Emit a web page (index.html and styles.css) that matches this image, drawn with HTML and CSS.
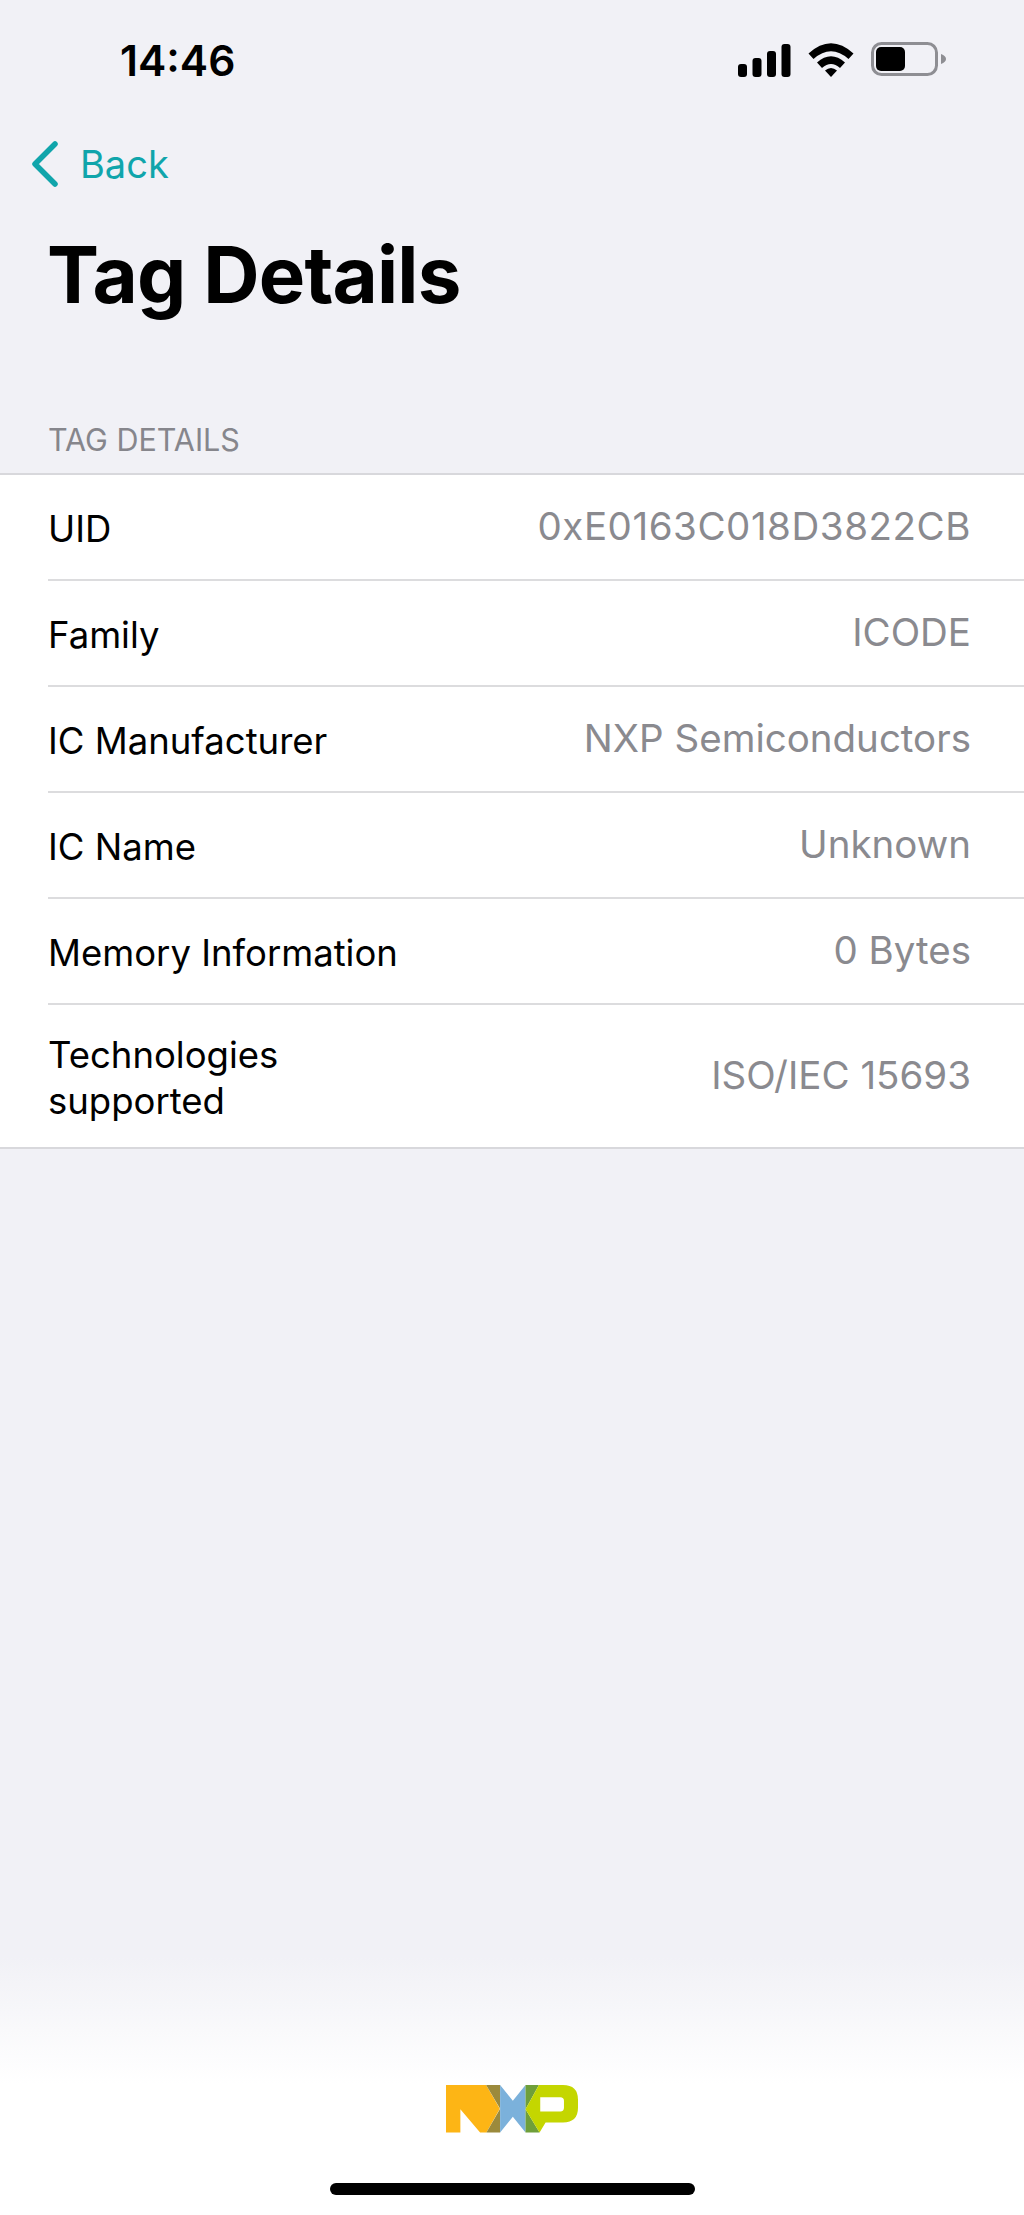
FILE: index.html
```html
<!DOCTYPE html>
<html lang="en">
  <head>
    <meta charset="UTF-8" />
    <meta name="viewport" content="width=device-width, initial-scale=1.0" />
    <title>Tag Details</title>
    <link rel="stylesheet" href="styles.css">
  </head>
  <body>
    <div class="status-bar">
      <div class="time">14:46</div>
      <div class="status-icons">
        <svg class="signal" width="53" height="33" viewBox="0 0 53 33">
          <rect x="0" y="20" width="9" height="13" rx="3" />
          <rect x="14.500" y="14" width="9" height="19" rx="3" />
          <rect x="29" y="7" width="9" height="26" rx="3" />
          <rect x="43.500" y="0" width="9" height="33" rx="3" />
        </svg>
        <svg class="wifi" width="46" height="34" viewBox="0 0 46 34">
          <path d="M0.500 10.500 Q23 -10 45.500 10.500 L40.500 16 Q23 0.500 5.500 16 Z" />
          <path d="M9 19.500 Q23 7 37 19.500 L32 25 Q23 17 14 25 Z" />
          <path d="M17 27.500 Q23 22.500 29 27.500 L23 34 Z" />
        </svg>
        <svg class="battery" width="76" height="36" viewBox="0 0 76 36">
          <rect x="1.500" y="1.500" width="64" height="31" rx="9" fill="none" stroke="#8e8e93" stroke-width="3" />
          <rect x="5" y="5" width="29" height="24" rx="5" />
          <path d="M70 12 Q75 14 75 17 Q75 20 70 22 Z" fill="#8e8e93" />
        </svg>
      </div>
    </div>

    <a class="back">
      <svg width="30" height="48" viewBox="0 0 30 48">
        <path d="M25 4 L5 24 L25 44" fill="none" stroke="#10a5ab" stroke-width="5.500" stroke-linecap="round" stroke-linejoin="round" />
      </svg>
      <span>Back</span>
    </a>

    <h1 class="title">Tag Details</h1>

    <div class="section-label">TAG DETAILS</div>

    <div class="list">
      <div class="row">
        <div class="row-name">UID</div>
        <div class="row-value row-value-uid">0xE0163C018D3822CB</div>
      </div>
      <div class="row">
        <div class="row-name">Family</div>
        <div class="row-value">ICODE</div>
      </div>
      <div class="row">
        <div class="row-name">IC Manufacturer</div>
        <div class="row-value">NXP Semiconductors</div>
      </div>
      <div class="row">
        <div class="row-name">IC Name</div>
        <div class="row-value">Unknown</div>
      </div>
      <div class="row">
        <div class="row-name">Memory Information</div>
        <div class="row-value">0 Bytes</div>
      </div>
      <div class="row row-tall">
        <div class="row-name">Technologies<br>supported</div>
        <div class="row-value">ISO/IEC 15693</div>
      </div>
    </div>

    <div class="footer">
      <svg class="logo" width="132" height="48" viewBox="140 78 395 143">
        <path fill="#fdb515" d="M140 78H260L301 149L261 220H242L183 150V220H140Z" />
        <path fill="#9b8a3c" d="M260 78H302V149ZM302 149V220H261Z" />
        <path fill="#7bb1db" d="M302 78L340 125L378 78V220L340 173L302 220Z" />
        <path fill="#6f9f3a" d="M378 78H418L378 150ZM378 150L420 220H378Z" />
        <path fill="#c4d600" fill-rule="evenodd" d="M418 78H490Q535 78 535 122V146Q535 190 490 190H438L420 220L378 150ZM422 114V157H482Q493 157 493 146V125Q493 114 482 114Z" />
      </svg>
      <div class="home-indicator"></div>
    </div>
  </body>
</html>
```

FILE: styles.css
```css
body {
  margin: 0;
  height: 2215px;
  overflow: hidden;
  display: flex;
  flex-direction: column;
  background-color: #f1f1f6;
  font-family: "Inter", "Liberation Sans", sans-serif;
  color: #000;
}

.status-bar {
  display: flex;
  justify-content: space-between;
  align-items: center;
  height: 60px;
  padding: 0 77px 0 120px;
  margin-top: 30px;
}

.time {
  font-size: 42.500px;
  font-weight: 600;
}

.status-icons {
  display: flex;
  align-items: center;
  gap: 17px;
}

.back {
  display: flex;
  align-items: center;
  gap: 20px;
  margin: 50px 0 0 30px;
  color: #10a5ab;
  font-size: 38px;
}

.title {
  margin: 42px 0 0 47px;
  font-size: 78px;
  font-weight: 700;
  letter-spacing: -0.800px;
  line-height: 90px;
}

.section-label {
  margin: 100px 0 0 48px;
  font-size: 30.500px;
  line-height: 40px;
  color: #86868c;
}

.list {
  margin-top: 13px;
  background-color: #fff;
  border-top: 2px solid #d8d8dc;
  border-bottom: 2px solid #d8d8dc;
}

.row {
  display: flex;
  justify-content: space-between;
  align-items: center;
  height: 104px;
  margin-left: 48px;
  padding-right: 53px;
  border-bottom: 2px solid #dcdcde;
}

.row-tall {
  height: 142px;
  border-bottom: none;
}

.row-name {
  padding-top: 3px;
  font-size: 36.500px;
  line-height: 46px;
}

.row-value {
  padding-bottom: 3px;
  font-size: 38.500px;
  color: #8a8a8f;
}

/* the digits run wider in the original */
.row-value-uid {
  letter-spacing: 0.550px;
}

.footer {
  flex: 1;
  display: flex;
  flex-direction: column;
  justify-content: flex-end;
  align-items: center;
  background: linear-gradient(#f1f1f6 0, #f1f1f6 808px, #fff 935px);
}

.logo {
  margin-bottom: 50px;
}

.home-indicator {
  width: 365px;
  height: 12px;
  margin-bottom: 20px;
  border-radius: 6px;
  background-color: #000;
}
```
